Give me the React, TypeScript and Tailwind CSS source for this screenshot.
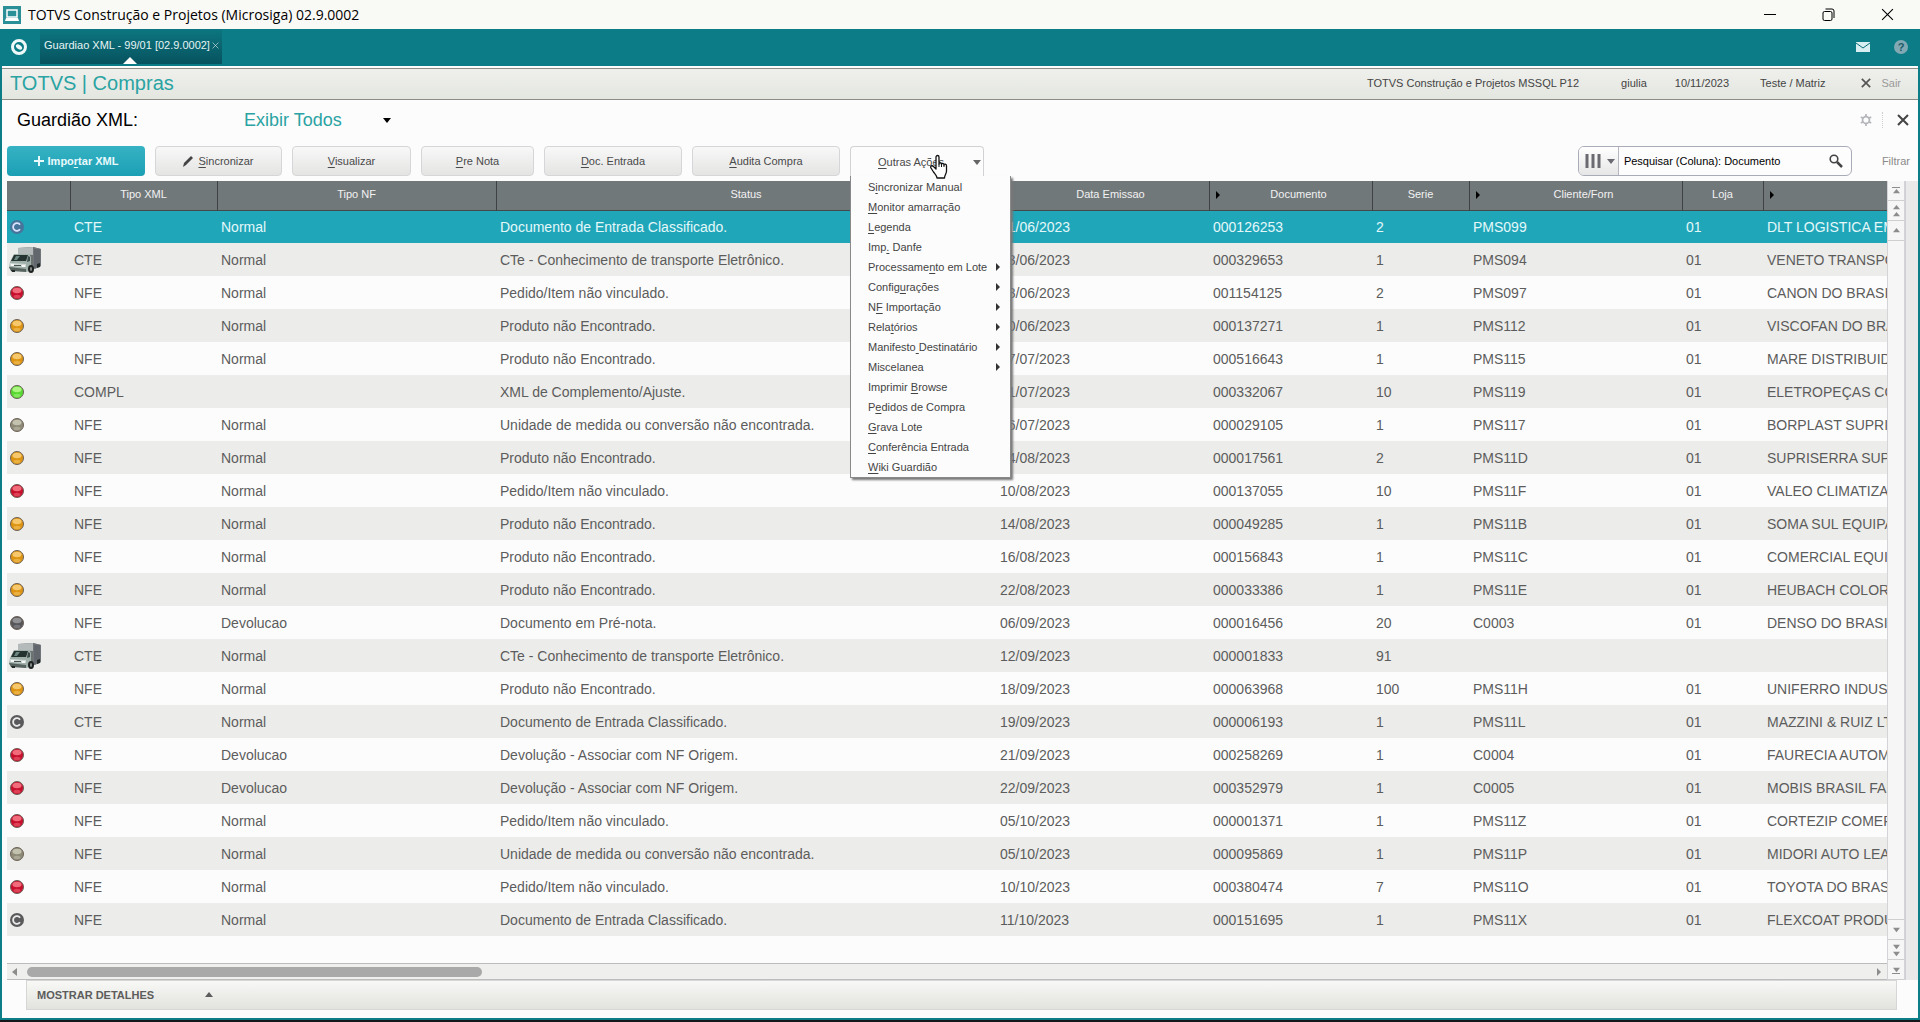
import type { ReactNode } from 'react'

type Dot = 'c' | 'truck' | 'red' | 'amber' | 'green' | 'olive' | 'dark'

interface Nota {
  dot: Dot
  xml: string
  nf: string
  status: string
  data: string
  doc: string
  serie: string
  cliente: string
  loja: string
  nome: string
}

const toNota = ([dot, xml, nf, status, data, doc, serie, cliente, loja, nome]: string[]): Nota => ({
  dot: dot as Dot, xml, nf, status, data, doc, serie, cliente, loja, nome,
})

const notas: Nota[] = [
  ['c', 'CTE', 'Normal', 'Documento de Entrada Classificado.', '01/06/2023', '000126253', '2', 'PMS099', '01', 'DLT LOGISTICA EM'],
  ['truck', 'CTE', 'Normal', 'CTe - Conhecimento de transporte Eletrônico.', '03/06/2023', '000329653', '1', 'PMS094', '01', 'VENETO TRANSPO'],
  ['red', 'NFE', 'Normal', 'Pedido/Item não vinculado.', '28/06/2023', '001154125', '2', 'PMS097', '01', 'CANON DO BRASIL'],
  ['amber', 'NFE', 'Normal', 'Produto não Encontrado.', '30/06/2023', '000137271', '1', 'PMS112', '01', 'VISCOFAN DO BRA'],
  ['amber', 'NFE', 'Normal', 'Produto não Encontrado.', '07/07/2023', '000516643', '1', 'PMS115', '01', 'MARE DISTRIBUIDO'],
  ['green', 'COMPL', '', 'XML de Complemento/Ajuste.', '21/07/2023', '000332067', '10', 'PMS119', '01', 'ELETROPEÇAS CO'],
  ['olive', 'NFE', 'Normal', 'Unidade de medida ou conversão não encontrada.', '26/07/2023', '000029105', '1', 'PMS117', '01', 'BORPLAST SUPRIM'],
  ['amber', 'NFE', 'Normal', 'Produto não Encontrado.', '04/08/2023', '000017561', '2', 'PMS11D', '01', 'SUPRISERRA SUPR'],
  ['red', 'NFE', 'Normal', 'Pedido/Item não vinculado.', '10/08/2023', '000137055', '10', 'PMS11F', '01', 'VALEO CLIMATIZAC'],
  ['amber', 'NFE', 'Normal', 'Produto não Encontrado.', '14/08/2023', '000049285', '1', 'PMS11B', '01', 'SOMA SUL EQUIPA'],
  ['amber', 'NFE', 'Normal', 'Produto não Encontrado.', '16/08/2023', '000156843', '1', 'PMS11C', '01', 'COMERCIAL EQUIP'],
  ['amber', 'NFE', 'Normal', 'Produto não Encontrado.', '22/08/2023', '000033386', '1', 'PMS11E', '01', 'HEUBACH COLORA'],
  ['dark', 'NFE', 'Devolucao', 'Documento em Pré-nota.', '06/09/2023', '000016456', '20', 'C0003', '01', 'DENSO DO BRASIL'],
  ['truck', 'CTE', 'Normal', 'CTe - Conhecimento de transporte Eletrônico.', '12/09/2023', '000001833', '91', '', '', ''],
  ['amber', 'NFE', 'Normal', 'Produto não Encontrado.', '18/09/2023', '000063968', '100', 'PMS11H', '01', 'UNIFERRO INDUST'],
  ['c', 'CTE', 'Normal', 'Documento de Entrada Classificado.', '19/09/2023', '000006193', '1', 'PMS11L', '01', 'MAZZINI & RUIZ LTD'],
  ['red', 'NFE', 'Devolucao', 'Devolução - Associar com NF Origem.', '21/09/2023', '000258269', '1', 'C0004', '01', 'FAURECIA AUTOMO'],
  ['red', 'NFE', 'Devolucao', 'Devolução - Associar com NF Origem.', '22/09/2023', '000352979', '1', 'C0005', '01', 'MOBIS BRASIL FAB'],
  ['red', 'NFE', 'Normal', 'Pedido/Item não vinculado.', '05/10/2023', '000001371', '1', 'PMS11Z', '01', 'CORTEZIP COMER'],
  ['olive', 'NFE', 'Normal', 'Unidade de medida ou conversão não encontrada.', '05/10/2023', '000095869', '1', 'PMS11P', '01', 'MIDORI AUTO LEAT'],
  ['red', 'NFE', 'Normal', 'Pedido/Item não vinculado.', '10/10/2023', '000380474', '7', 'PMS11O', '01', 'TOYOTA DO BRASI'],
  ['c', 'NFE', 'Normal', 'Documento de Entrada Classificado.', '11/10/2023', '000151695', '1', 'PMS11X', '01', 'FLEXCOAT PRODU'],
].map(toNota)

const columns = [
  { title: '', width: 'w-[63px]' },
  { title: 'Tipo XML', width: 'w-[147px]' },
  { title: 'Tipo NF', width: 'w-[279px]' },
  { title: 'Status', width: 'w-[500px]' },
  { title: 'Data Emissao', width: 'w-[213px]', arrow: true },
  { title: 'Documento', width: 'w-[163px]', arrow: true },
  { title: 'Serie', width: 'w-[97px]' },
  { title: 'Cliente/Forn', width: 'w-[213px]', arrow: true },
  { title: 'Loja', width: 'w-[81px]' },
  { title: '', width: '', arrow: true },
]

// "_" comes before the shortcut letter
const menuItems = [
  { label: 'S_incronizar Manual' },
  { label: '_Monitor amarração' },
  { label: '_Legenda' },
  { label: 'Imp_. Danfe' },
  { label: 'Processame_nto em Lote', sub: true },
  { label: 'Config_urações', sub: true },
  { label: 'N_F Importação', sub: true },
  { label: 'Rela_tórios', sub: true },
  { label: 'Manifesto_ Destinatário', sub: true },
  { label: 'Miscelanea', sub: true },
  { label: 'Imprimir _Browse' },
  { label: 'P_edidos de Compra' },
  { label: '_Grava Lote' },
  { label: '_Conferência Entrada' },
  { label: '_Wiki Guardião' },
]

const dotColors: Record<string, [string, string]> = {
  red: ['#ff8a94', '#c8102e'],
  amber: ['#ffd98a', '#dd9412'],
  green: ['#c4ff9a', '#58d832'],
  olive: ['#d6d4c0', '#8d8b78'],
  dark: ['#a5a5a8', '#56565a'],
}

function Shortcut({ label }: { label: string }) {
  const i = label.indexOf('_')
  if (i < 0) return <>{label}</>
  return (
    <span className="whitespace-pre">
      {label.slice(0, i)}
      <u className="underline-offset-2">{label[i + 1]}</u>
      {label.slice(i + 2)}
    </span>
  )
}

function Triangle({ dir, className }: { dir: 'up' | 'down' | 'left' | 'right'; className?: string }) {
  const paths = { up: 'M0 6 4 1 8 6Z', down: 'M0 2 4 7 8 2Z', left: 'M6 0 1 4 6 8Z', right: 'M2 0 6 4 2 8Z' }
  return (
    <svg viewBox="0 0 8 8" className={`shrink-0 ${className ?? 'size-2'}`} fill="currentColor" aria-hidden="true">
      <path d={paths[dir]} />
    </svg>
  )
}

function Cross({ className }: { className?: string }) {
  return (
    <svg viewBox="0 0 12 12" className={className} stroke="currentColor" aria-hidden="true">
      <path d="M1 1 11 11M11 1 1 11" />
    </svg>
  )
}

function Truck() {
  return (
    <svg viewBox="0 0 32 26" className="h-[26px] w-8" aria-hidden="true">
      <path d="M9 1 24 0 32 2 32 19 26 22 21 21 21 8 9 7Z" fill="#6b7270" />
      <path d="M9 1 24 0 24 8 9 7Z" fill="#b4b9ba" />
      <path d="M24 0 32 2 32 19 24 22Z" fill="#70757a" />
      <path d="M26 2v19M28 2v18M30 2v18" stroke="#555b60" />
      <path d="M5 7 20 7 22 10 22 22 18 25 2 23 0 21 1 15Z" fill="#9fb0ab" />
      <path d="M5 8 19 8 17 14 2 14Z" fill="#24332f" />
      <path d="M7 9 11 9 8 13 5 13Z" fill="#6b8580" />
      <path d="M19 9 21 10 21 14 18 15Z" fill="#3b4a48" />
      <path d="M1 16 17 17 17 20 1 19Z" fill="#cfd8d4" />
      <path d="M2 17h3v2H2zM13 18h3v2h-3z" fill="#f4f7f5" />
      <path d="M5 18h7v1H5z" fill="#46544f" />
      <path d="M0 20 17 22 17 25 2 24Z" fill="#56635f" />
      <ellipse cx="22" cy="22" rx="3" ry="4" fill="#1d2221" />
      <ellipse cx="22" cy="22" rx="1" ry="2" fill="#8b9290" />
      <path d="M2 23h4v2H3zM28 17l3-1v4l-3 1z" fill="#222827" />
    </svg>
  )
}

function StatusDot({ dot, selected }: { dot: Dot; selected: boolean }) {
  if (dot === 'truck') return <Truck />
  if (dot === 'c') {
    return (
      <svg viewBox="0 0 16 16" className="size-4" aria-hidden="true">
        <circle cx="8" cy="8" r="7" fill={selected ? '#46749a' : '#5a5a5c'} />
        <path d="M11 5.800A3.800 3.800 0 1 0 11 10.200" fill="none" stroke={selected ? '#dbe2ff' : '#ececec'} strokeWidth="1.800" />
      </svg>
    )
  }
  const [light, base] = dotColors[dot]
  return (
    <svg viewBox="0 0 16 16" className="size-4" aria-hidden="true">
      <circle cx="8" cy="8" r="6.500" fill={base} stroke="#6d6258" />
      <ellipse cx="8" cy="5.500" rx="4.500" ry="2.800" fill={light} opacity="0.75" />
      <ellipse cx="8" cy="11.500" rx="3.500" ry="1.800" fill={light} opacity="0.4" />
    </svg>
  )
}

function ToolButton({ className, children }: { className: string; children: ReactNode }) {
  return (
    <button
      className={`flex h-[30px] items-center justify-center gap-1 rounded-sm border border-[#d6d6d8] bg-linear-to-b from-[#f8f8f8] to-[#e4e4e3] text-[#4a4a4a] ${className}`}
    >
      {children}
    </button>
  )
}

function HandCursor() {
  return (
    <svg viewBox="0 0 18 25" className="pointer-events-none absolute top-2 left-20 z-30 h-[25px] w-[18px]" aria-hidden="true">
      <path
        d="M6 15V3c0-2 3-2 3 0v7c0-1.500 2.500-1.500 2.500.5 0-1.500 2.500-1.500 2.500.5 0-1.500 2.500-1 2.500.8V17c0 3-2 4-2 7H7c0-2-2-4-3.500-6L1 14c-1-2 1-3 2.500-1.500Z"
        fill="#fff"
        stroke="#111"
        strokeWidth="1.300"
        strokeLinejoin="round"
      />
      <path d="M9 10v3M11.500 11v2M14 11v2" stroke="#111" />
    </svg>
  )
}

function WindowTitle() {
  return (
    <div className="flex h-[29px] items-center bg-[#f9faf6] pr-[26px] pl-[3px] text-black">
      <svg viewBox="0 0 18 18" className="size-[18px]" aria-hidden="true">
        <path d="M0 0h18v18H0z" fill="#2a8f96" />
        <path d="M4 4h10v7H4z" fill="#2a8f96" stroke="#fff" strokeWidth="1.500" />
        <path d="M3 12h12l1 3H2z" fill="#fff" />
      </svg>
      <h1 className="ml-[7px] flex-1 font-['Open_Sans',sans-serif] text-sm">TOTVS Construção e Projetos (Microsiga) 02.9.0002</h1>
      <div className="flex items-center gap-[46px]">
        <button aria-label="Minimizar" className="h-px w-3 bg-black" />
        <button aria-label="Restaurar">
          <svg viewBox="0 0 13 13" className="size-[13px]" fill="none" stroke="#000" aria-hidden="true">
            <rect x="1" y="3.500" width="9" height="9" rx="1.500" />
            <path d="M3.500 1H10a2 2 0 0 1 2 2v7" />
          </svg>
        </button>
        <button aria-label="Fechar"><Cross className="size-[13px]" /></button>
      </div>
    </div>
  )
}

function TabBar() {
  return (
    <div className="flex h-[37px] shrink-0 items-stretch bg-[#0c7c87] pr-3 pb-0.5 text-[11px] text-[#e6f4f4]">
      <button aria-label="Início" className="flex w-[38px] items-center justify-center">
        <svg viewBox="0 0 18 18" className="size-[18px]" aria-hidden="true">
          <circle cx="9" cy="9" r="6.500" fill="none" stroke="#eef8f8" strokeWidth="3" />
          <ellipse cx="9" cy="9" rx="3.500" ry="2" fill="#eef8f8" transform="rotate(35 9 9)" />
        </svg>
      </button>
      <div className="relative ml-0.5 flex w-[182px] items-center bg-linear-to-b from-[#0c7680] to-[#07535f] pb-0.5 pl-1">
        <span className="whitespace-nowrap">Guardiao XML - 99/01 [02.9.0002]</span>
        <button aria-label="Fechar aba" className="ml-0.5"><Cross className="size-[7px]" /></button>
        <svg viewBox="0 0 14 7" className="absolute bottom-0 left-[83px] h-[7px] w-3.5" aria-hidden="true">
          <path d="M0 7 7 0 14 7Z" fill="#fff" />
        </svg>
      </div>
      <div className="ml-auto flex items-center gap-6">
        <button aria-label="Mensagens">
          <svg viewBox="0 0 14 10" className="h-2.5 w-3.5" aria-hidden="true">
            <path d="M0 0h14v10H0z" fill="#d9eef0" />
            <path d="M0 1 7 6 14 1" fill="none" stroke="#0a6a75" />
          </svg>
        </button>
        <button aria-label="Ajuda" className="size-3.5 rounded-full bg-[#82a9b3] text-[11px] leading-3 font-bold text-[#1a5c68]">?</button>
      </div>
    </div>
  )
}

function ModuleBar() {
  return (
    <div className="flex h-8 shrink-0 items-center border-y border-[#8d8d86] bg-linear-to-b from-[#eff0ec] to-[#e4e6e0] pr-[17px] pb-0.5 pl-2 text-[11px] text-[#444]">
      <h2 className="flex-1 text-[20px] text-[#2aa3a3]">TOTVS | Compras</h2>
      <span>TOTVS Construção e Projetos MSSQL P12</span>
      <span className="ml-[42px]">giulia</span>
      <span className="ml-7">10/11/2023</span>
      <span className="ml-[31px]">Teste / Matriz</span>
      <button className="ml-9 flex items-center gap-2.5 text-[#9a9a9a]">
        <Cross className="size-2.5 stroke-2 text-[#555]" />
        Sair
      </button>
    </div>
  )
}

function BrowseTitle() {
  return (
    <div className="mb-1.5 flex h-10 items-center pr-[9px] pl-[15px] text-[18px]">
      <h3 className="w-[227px] text-black">Guardião XML:</h3>
      <button className="flex w-[147px] items-center justify-between text-[#2aa3a3]">
        Exibir Todos
        <Triangle dir="down" className="size-2 text-black" />
      </button>
      <div className="ml-auto flex items-center gap-2.5">
        <button aria-label="Configurar">
          <svg viewBox="0 0 14 14" className="size-3" fill="none" stroke="#b4b6ba" aria-hidden="true">
            <circle cx="7" cy="7" r="4" strokeWidth="2" />
            <path d="M7 0v3M7 11v3M1 3.500 3.500 5M10.500 9 13 10.500M1 10.500 3.500 9M10.500 5 13 3.500" strokeWidth="2" />
          </svg>
        </button>
        <span className="h-4 border-l border-dotted border-[#d0d0d0]" />
        <button aria-label="Fechar" className="ml-1"><Cross className="size-3 stroke-2 text-[#444]" /></button>
      </div>
    </div>
  )
}

function ActionsMenu() {
  return (
    <div className="relative w-[134px]">
      <button className="flex h-[35px] w-full items-start rounded-t-sm border border-b-0 border-[#d2d2d4] bg-[#fcfcfc] pt-[7px] pl-[27px] text-[#4a4a4a]">
        <Shortcut label="_Outras Ações" />
        <Triangle dir="down" className="mt-1 mr-0.5 ml-auto size-2 text-[#666]" />
      </button>
      <HandCursor />
      <ul className="absolute top-[30px] left-0 z-20 w-[161px] border border-t-0 border-[#8a8a8a] bg-[#fcfcfc] pt-px text-[#444] shadow-[2px_2px_2px_#777]">
        {menuItems.map((item) => (
          <li key={item.label}>
            <button className="flex h-5 w-full items-center justify-between pr-2 pl-[17px] text-left">
              <Shortcut label={item.label} />
              {item.sub && <Triangle dir="right" className="size-2 text-[#333]" />}
            </button>
          </li>
        ))}
      </ul>
    </div>
  )
}

function Toolbar() {
  return (
    <div className="flex h-[35px] items-start gap-2.5 pr-2 text-[11px]">
      <button className="flex h-[30px] w-[138px] items-center justify-center gap-1 rounded-sm bg-linear-to-b from-[#35b3c4] to-[#1b9fb4] font-bold text-[#e8fafc]">
        <svg viewBox="0 0 10 10" className="size-2.5" aria-hidden="true">
          <path d="M5 0v10M0 5h10" stroke="currentColor" strokeWidth="2" />
        </svg>
        <Shortcut label="Impo_rtar XML" />
      </button>
      <ToolButton className="w-[127px]">
        <svg viewBox="0 0 11 12" className="h-3 w-[11px]" aria-hidden="true">
          <path d="M0 12 1 8 8 1 10 3 3 10Z" fill="#444" />
        </svg>
        <Shortcut label="_Sincronizar" />
      </ToolButton>
      <ToolButton className="w-[119px]"><Shortcut label="_Visualizar" /></ToolButton>
      <ToolButton className="w-[113px]"><Shortcut label="_Pre Nota" /></ToolButton>
      <ToolButton className="w-[138px]"><Shortcut label="_Doc. Entrada" /></ToolButton>
      <ToolButton className="w-[148px]"><Shortcut label="_Audita Compra" /></ToolButton>
      <ActionsMenu />
      <div className="ml-auto flex h-[30px] w-[274px] items-stretch overflow-hidden rounded-md border border-[#a9abb8] bg-[#fdfdfd]">
        <button aria-label="Escolher coluna" className="flex w-10 items-center gap-1.5 border-r border-[#b4b6c0] bg-linear-to-b from-white to-[#e6e6e6] pl-1.5 text-[#6a6a70]">
          <svg viewBox="0 0 16 14" className="h-3.5 w-4" aria-hidden="true">
            <path d="M2 0v14M8 0v14M14 0v14" stroke="currentColor" strokeWidth="3" />
          </svg>
          <Triangle dir="down" />
        </button>
        <input aria-label="Pesquisar" defaultValue="Pesquisar (Coluna): Documento" className="min-w-0 flex-1 pl-[5px] text-black outline-none" />
        <button aria-label="Buscar" className="pr-2 text-[#444]">
          <svg viewBox="0 0 14 14" className="size-3.5" fill="none" stroke="currentColor" aria-hidden="true">
            <circle cx="5" cy="5" r="3.800" strokeWidth="1.600" />
            <path d="M8 8 13 13" strokeWidth="2.500" />
          </svg>
        </button>
      </div>
      <button className="ml-5 h-[30px] text-[#8a8a8a]">Filtrar</button>
    </div>
  )
}

function NotasTable() {
  return (
    <table className="w-full table-fixed border-collapse text-sm text-[#5c5c5c]">
      <colgroup>
        {columns.map((col, i) => <col key={i} className={col.width} />)}
      </colgroup>
      <thead>
        <tr className="h-[29px] border-b border-[#46494b] bg-[#71787a] text-[11px] text-[#f2f2f2]">
          {columns.map((col, i) => (
            <th key={i} className="border-r border-[#3f4244] p-0 font-normal last:border-r-0">
              <div className="flex items-center">
                {col.arrow && <Triangle dir="right" className="mx-1 size-2 text-black" />}
                <span className="flex-1 text-center">{col.title}</span>
              </div>
            </th>
          ))}
        </tr>
      </thead>
      <tbody>
        {notas.map((nota, i) => (
          <tr
            key={nota.doc}
            className={`h-[33px] ${i === 0 ? 'bg-[#20a6b9] text-[#e4f8fa]' : i % 2 ? 'bg-[#ececea]' : 'bg-[#fcfcfc]'}`}
          >
            <td className="p-0 pl-0.5"><StatusDot dot={nota.dot} selected={i === 0} /></td>
            {[nota.xml, nota.nf, nota.status, nota.data, nota.doc, nota.serie, nota.cliente, nota.loja, nota.nome].map((text, j) => (
              <td key={j} className="overflow-hidden p-0 pl-1 whitespace-nowrap">{text}</td>
            ))}
          </tr>
        ))}
      </tbody>
    </table>
  )
}

function VerticalScroll() {
  const cell = 'flex h-5 w-full flex-col items-center justify-center border-b border-[#cfcfcf] text-[#8c8c8c]'
  const arrow = 'size-[7px]'
  return (
    <div className="flex w-[18px] shrink-0 flex-col justify-between border-x border-[#d4d4d8] bg-[#f6f6f7]">
      <div>
        <button aria-label="Primeiro registro" className={cell}><span className="h-px w-2 bg-current" /><Triangle dir="up" className={arrow} /></button>
        <button aria-label="Página anterior" className={cell}><Triangle dir="up" className={arrow} /><Triangle dir="up" className={arrow} /></button>
        <button aria-label="Registro anterior" className={cell}><Triangle dir="up" className={arrow} /></button>
      </div>
      <div className="border-t border-[#cfcfcf]">
        <button aria-label="Próximo registro" className={cell}><Triangle dir="down" className={arrow} /></button>
        <button aria-label="Próxima página" className={cell}><Triangle dir="down" className={arrow} /><Triangle dir="down" className={arrow} /></button>
        <button aria-label="Último registro" className={cell}><Triangle dir="down" className={arrow} /><span className="h-px w-2 bg-current" /></button>
      </div>
    </div>
  )
}

export default function App() {
  return (
    <div className="flex min-h-screen flex-col border-b-2 border-[#15181a] bg-[#fcfcfc] font-['Liberation_Sans',Arial,sans-serif]">
      <WindowTitle />
      <TabBar />
      <div className="flex flex-1 flex-col border-x-2 border-b-2 border-[#0c7c87] pt-0.5">
        <ModuleBar />
        <main className="flex flex-1 flex-col">
          <BrowseTitle />
          <div className="pl-[5px]">
            <Toolbar />
          </div>
          <div className="flex flex-1">
            <div className="flex min-w-0 flex-1 flex-col pl-[5px]">
              <div className="flex-1">
                <NotasTable />
              </div>
              <div className="flex h-[17px] items-center border-y border-[#bcbcbc] bg-[#efefed] px-1 text-[#8c8c8c]">
                <Triangle dir="left" />
                <div className="mx-2 flex-1">
                  <div className="h-2.5 w-[455px] rounded-full bg-[#a9a9a9]" />
                </div>
                <Triangle dir="right" />
              </div>
            </div>
            <VerticalScroll />
            <div className="w-[13px] shrink-0 border-l border-[#d0d0d4] bg-[#e9e9e9]" />
          </div>
          <div className="mr-[21px] mb-2 ml-6">
            <button className="flex h-[30px] w-full items-center gap-[51px] border border-[#d6d6d6] bg-linear-to-b from-[#f8f8f6] to-[#e2e2de] pl-2.5 text-[11px] font-bold text-[#5c5c5c]">
              MOSTRAR DETALHES
              <Triangle dir="up" />
            </button>
          </div>
        </main>
      </div>
    </div>
  )
}
